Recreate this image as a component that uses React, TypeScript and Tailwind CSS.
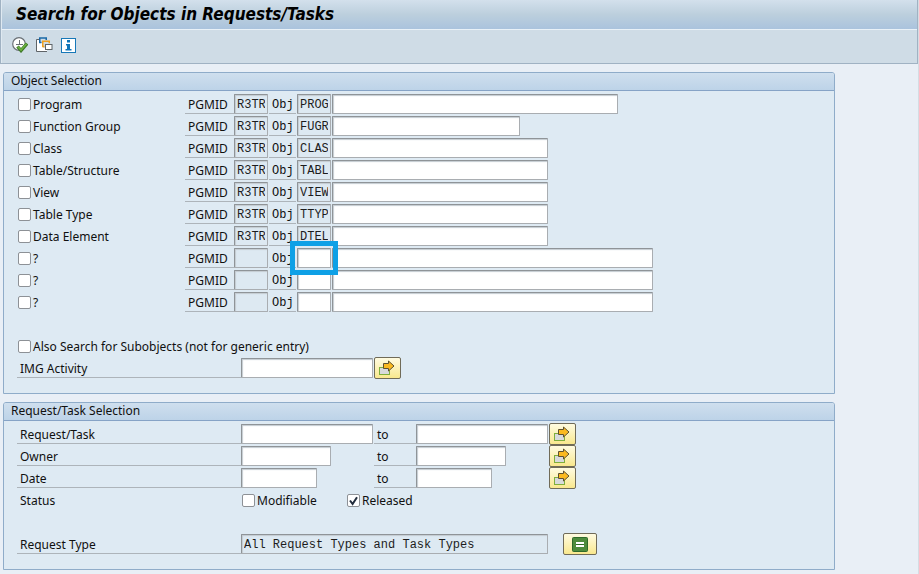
import type { ReactNode } from "react";

type ObjectRow = { label: string; pgmid: string; obj: string; width: string; marked?: boolean };

const objectRows: ObjectRow[] = [
  { label: "Program", pgmid: "R3TR", obj: "PROG", width: "w-[286px]" },
  { label: "Function Group", pgmid: "R3TR", obj: "FUGR", width: "w-[188px]" },
  { label: "Class", pgmid: "R3TR", obj: "CLAS", width: "w-[216px]" },
  { label: "Table/Structure", pgmid: "R3TR", obj: "TABL", width: "w-[216px]" },
  { label: "View", pgmid: "R3TR", obj: "VIEW", width: "w-[216px]" },
  { label: "Table Type", pgmid: "R3TR", obj: "TTYP", width: "w-[216px]" },
  { label: "Data Element", pgmid: "R3TR", obj: "DTEL", width: "w-[216px]" },
  { label: "?", pgmid: "", obj: "", width: "w-[321px]", marked: true },
  { label: "?", pgmid: "", obj: "", width: "w-[321px]" },
  { label: "?", pgmid: "", obj: "", width: "w-[321px]" },
];

const rangeRows = [
  { label: "Request/Task", width: "w-[132px]" },
  { label: "Owner", width: "w-[90px]" },
  { label: "Date", width: "w-[76px]" },
];

const mono = "font-['Liberation_Mono','Courier_New',monospace] text-[12px]";

function Field({ label, width, value = "", readOnly = false }: { label: string; width: string; value?: string; readOnly?: boolean }) {
  return (
    <input
      type="text"
      aria-label={label}
      defaultValue={value}
      readOnly={readOnly}
      className={`${mono} ${width} ${readOnly ? "bg-[#dde9f2]" : "bg-white"} block h-5 shrink-0 rounded-[1px] border border-[#a9adb1] border-t-[#8f9498] border-l-[#8f9498] px-[2px] pt-[2px] text-[#1c1c1c] shadow-[inset_1px_1px_1px_#c4cbd1] outline-none`}
    />
  );
}

function Check({ label, checked = false }: { label: string; checked?: boolean }) {
  return (
    <label className="flex items-center gap-[2px] whitespace-nowrap">
      <span className="grid size-[13px] shrink-0">
        <input
          type="checkbox"
          defaultChecked={checked}
          className="peer col-start-1 row-start-1 size-[13px] appearance-none rounded-[2px] border border-[#8d9196] bg-white"
        />
        <svg viewBox="0 0 13 13" className="pointer-events-none invisible col-start-1 row-start-1 size-[13px] peer-checked:visible">
          <path d="M3 6.5 5.6 10 10 3.2" fill="none" stroke="#222c3c" strokeWidth="2" />
        </svg>
      </span>
      <span className="pt-[2px]">{label}</span>
    </label>
  );
}

function Caption({ children, width }: { children: ReactNode; width: string }) {
  return <span className={`${width} flex h-5 shrink-0 items-center border-b border-[#adb4ba] pt-[2px] pl-[3px]`}>{children}</span>;
}

function MoreButton({ label }: { label: string }) {
  return (
    <button
      type="button"
      aria-label={label}
      className="flex h-[22px] w-[27px] shrink-0 items-center justify-center rounded-[2px] border border-[#706b58] bg-linear-to-b from-[#fffbe0] to-[#f9e88d]"
    >
      <svg viewBox="0 0 17 16" className="h-4 w-[17px]">
        <rect x=".5" y="7.500" width="10" height="7" fill="#d8dadb" stroke="#7fae3c" />
        <path d="M4.500 3.500h5v-2.500l5.500 5-5.500 5v-2.500h-5z" fill="#fbb91f" stroke="#5e5130" />
      </svg>
    </button>
  );
}

function Panel({ title, children }: { title: string; children: ReactNode }) {
  return (
    <section className="w-full max-w-[832px] rounded-t-[3px] border border-[#8facc9] bg-[#deeaf3]">
      <h2 className="flex h-[18px] items-center rounded-t-[2px] border-b border-[#86a3c6] bg-linear-to-b from-[#cfdfee] to-[#bdd3e8] pb-[2px] pl-[7px]">
        {title}
      </h2>
      <div className="pt-[2px] pb-[14px] pl-[13px]">{children}</div>
    </section>
  );
}

function ExecuteIcon() {
  return (
    <svg viewBox="0 0 16 16" className="size-4">
      <circle cx="7" cy="7" r="6.300" fill="#fff" stroke="#6a7075" strokeWidth="1.200" />
      <path d="M7.500 3v5M4 7.500h7" fill="none" stroke="#6a7075" />
      <path d="m5.500 9.500 3.500 4 6-7" fill="none" stroke="#3f7a2a" strokeWidth="3.400" />
      <path d="m6 9.800 3 3.200 5.500-6.300" fill="none" stroke="#6db33f" strokeWidth="1.600" />
    </svg>
  );
}

function VariantIcon() {
  return (
    <svg viewBox="0 0 17 16" className="h-4 w-[17px]">
      <path d="M1 2h3v4h3v5h4v4H1z" fill="#fff" />
      <path d="M3 2.500H.5v12H11" fill="none" stroke="#5f6468" />
      <path d="M5.500 5.500H3.750V1h6.500v2" fill="none" stroke="#1b69a8" strokeWidth="1.500" />
      <path d="M8.500 9.500H6.750V4.250h6.500v2" fill="none" stroke="#f0a020" strokeWidth="1.500" />
      <rect x="9.500" y="7.500" width="6.500" height="5" fill="#fff" stroke="#5f6468" />
    </svg>
  );
}

function InfoIcon() {
  return (
    <svg viewBox="0 0 15 15" className="size-[15px]">
      <rect x=".5" y=".5" width="14" height="14" fill="#fff" stroke="#1778b8" />
      <path d="M6 2h3v2.500H6zM5 6h4v5h1.500v1.500h-6V11H6V7.500H5z" fill="#0f74b8" />
    </svg>
  );
}

export default function App() {
  return (
    <div className="min-h-screen border-r border-[#d5dce3] bg-[#e9eff6] font-['Noto_Sans',sans-serif] text-[12px] leading-4 text-[#101010]">
      <header className="border-x border-b border-[#a0b2c3] bg-[#cfdce6]">
        <h1 className="flex h-[30px] items-center border-b border-l border-b-[#e9f1f7] border-l-[#dfe9f1] bg-linear-to-b from-[#d3e0ec] via-[#bccfdd] to-[#aac3dd] pb-[2px] pl-[14px] font-['DejaVu_Sans_Condensed',sans-serif] text-[17px] leading-5 font-bold whitespace-nowrap text-black italic">
          Search for Objects in Requests/Tasks
        </h1>
        <div className="flex h-[33px] items-center gap-2 border-l border-[#dfe9f1] pb-[3px] pl-[10px]">
          <button type="button" aria-label="Execute"><ExecuteIcon /></button>
          <button type="button" aria-label="Get variant"><VariantIcon /></button>
          <button type="button" aria-label="Information"><InfoIcon /></button>
        </div>
      </header>

      <main className="flex flex-col gap-2 px-[3px] pt-2 pb-1">
        <Panel title="Object Selection">
          {objectRows.map((row, i) => (
            <div key={i} className="flex h-[22px] items-center">
              <div className="w-[168px] shrink-0 pl-[1px]"><Check label={row.label} /></div>
              <Caption width="w-[49px]">PGMID</Caption>
              <Field label={`PGMID ${i + 1}`} width="w-[34px]" value={row.pgmid} readOnly />
              <div className={`${mono} mx-[1px]`}><Caption width="w-[27px]">Obj</Caption></div>
              <div className="relative mr-[1px]">
                <Field label={`Object type ${i + 1}`} width="w-[34px]" value={row.obj} readOnly={row.obj !== ""} />
                {row.marked && <span className="pointer-events-none absolute -inset-x-[7px] -inset-y-[7px] z-10 border-[5px] border-[#0ea0e6]" />}
              </div>
              <Field label={`Object name ${i + 1}`} width={row.width} />
            </div>
          ))}
          <div className="mt-[22px] flex h-[22px] items-center pl-[1px]">
            <Check label="Also Search for Subobjects (not for generic entry)" />
          </div>
          <div className="flex h-[22px] items-center">
            <Caption width="w-[224px]">IMG Activity</Caption>
            <Field label="IMG Activity" width="w-[132px]" />
            <div className="ml-[1px]"><MoreButton label="Multiple selection for IMG Activity" /></div>
          </div>
        </Panel>

        <Panel title="Request/Task Selection">
          {rangeRows.map((row) => (
            <div key={row.label} className="grid h-[22px] grid-cols-[224px_133px_42px_133px_27px] items-center">
              <Caption width="w-full">{row.label}</Caption>
              <Field label={`${row.label} from`} width={row.width} />
              <Caption width="w-full">to</Caption>
              <Field label={`${row.label} to`} width={row.width} />
              <MoreButton label={`Multiple selection for ${row.label}`} />
            </div>
          ))}
          <div className="flex h-[22px] items-center pl-[3px]">
            <span className="w-[222px] pt-[2px]">Status</span>
            <div className="w-[105px]"><Check label="Modifiable" /></div>
            <Check label="Released" checked />
          </div>
          <div className="mt-[22px] flex h-[22px] items-center">
            <Caption width="w-[224px]">Request Type</Caption>
            <Field label="Request Type" width="w-[307px]" value="All Request Types and Task Types" readOnly />
            <button
              type="button"
              aria-label="Select request types"
              className="ml-[15px] flex h-[22px] w-[34px] items-center justify-center rounded-[2px] border border-[#706b58] bg-linear-to-b from-[#fffbe0] to-[#f9e88d]"
            >
              <svg viewBox="0 0 16 15" className="h-[15px] w-4">
                <rect x=".5" y=".5" width="15" height="14" rx="1" fill="#4e8c3d" stroke="#2f6b2a" />
                <path d="M4 6h8M4 9h8" stroke="#fff" strokeWidth="2" />
                <path d="M4 7.500h8" stroke="#2f6b2a" />
              </svg>
            </button>
          </div>
        </Panel>
      </main>
    </div>
  );
}
